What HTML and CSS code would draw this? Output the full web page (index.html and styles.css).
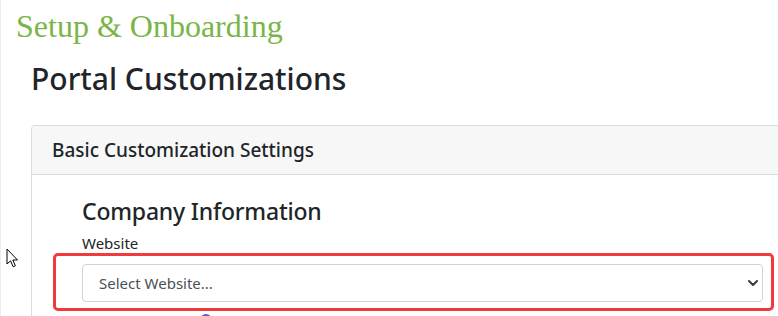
FILE: index.html
```html
<!DOCTYPE html>
<html lang="en">
<head>
    <meta charset="UTF-8">
    <meta name="viewport" content="width=device-width, initial-scale=1.0">
    <title>Portal Customizations</title>
    <link rel="stylesheet" href="styles.css">
</head>
<body>
    <div class="page">
        <div class="brandTitle">Setup &amp; Onboarding</div>

        <div class="content">
            <h1 class="pageTitle">Portal Customizations</h1>

            <div class="card">
                <div class="cardHeader">Basic Customization Settings</div>
                <div class="cardBody">
                    <h4 class="sectionTitle">Company Information</h4>

                    <div class="formGroup">
                        <label class="formLabel" for="website">Website</label>
                        <div class="selectWrap">
                            <select class="formSelect" id="website">
                                <option>Select Website...</option>
                            </select>
                            <svg class="chevron" width="12" height="10" viewBox="0 0 12 10">
                                <path d="M2 3 L6 7 L10 3" fill="none" stroke="#343a40" stroke-width="2" stroke-linecap="round" stroke-linejoin="round"/>
                            </svg>
                            <div class="highlight"></div>
                        </div>
                    </div>

                    <div class="nextRow"><span class="dot"></span></div>
                </div>
            </div>
        </div>

        <svg class="mouse" width="14" height="21" viewBox="0 0 14 21">
            <path d="M1 1 L1 16 L4.5 12.8 L7.2 18.8 L9.4 17.8 L6.8 12 L11.5 12 Z" fill="#fff" stroke="#000" stroke-width="1" stroke-linejoin="miter"/>
        </svg>
    </div>
</body>
</html>
```

FILE: styles.css
```css
html, body {
    margin: 0;
    background-color: #fff;
    overflow: hidden;
}

.page {
    position: relative;
    height: 316px;
    border-left: 1px solid #ececec;
    font-family: "Noto Sans", "Open Sans", sans-serif;
    color: #212529;
}

.brandTitle {
    font-family: "Liberation Serif", "Times New Roman", serif;
    font-size: 32px;
    line-height: 38px;
    color: #7ab547;
    padding: 7px 0 0 15px;
}

.content {
    padding-left: 30px;
}

.pageTitle {
    margin: 14px 0 0 0;
    font-size: 30px;
    font-weight: 500;
    line-height: 40px;
}

.card {
    margin-top: 26px;
    margin-right: -36px;
    border: 1px solid #dcdcdc;
    border-radius: 4px;
}

.cardHeader {
    background-color: #f7f7f7;
    border-bottom: 1px solid #dcdcdc;
    border-radius: 4px 4px 0 0;
    padding: 0 20px;
    height: 48px;
    line-height: 48px;
    font-size: 19px;
    font-weight: 500;
}

.cardBody {
    padding: 20px 50px 0 50px;
}

.sectionTitle {
    margin: 0;
    font-size: 23px;
    font-weight: 500;
    line-height: 32px;
    letter-spacing: -0.2px;
}

.formGroup {
    margin-top: 6px;
}

.formLabel {
    display: block;
    font-size: 15px;
    line-height: 21px;
    margin-bottom: 10px;
}

.selectWrap {
    position: relative;
}

.formSelect {
    display: block;
    width: 100%;
    height: 38px;
    padding: 0 16px;
    border: 1px solid #ced4da;
    border-radius: 4px;
    background-color: #fff;
    font-family: "Noto Sans", "Open Sans", sans-serif;
    font-size: 15px;
    color: #495057;
    appearance: none;
    -webkit-appearance: none;
}

.chevron {
    position: absolute;
    right: 4px;
    top: 14px;
}

.highlight {
    position: absolute;
    left: -29px;
    top: -11px;
    right: -11px;
    bottom: -9px;
    border: 3px solid #ef3b3b;
    border-radius: 5px;
    pointer-events: none;
}

.nextRow {
    padding: 12px 0 0 118px;
}

.dot {
    display: block;
    width: 12px;
    height: 12px;
    border-radius: 50%;
    background-color: #5b5fc7;
}

.mouse {
    position: absolute;
    left: 5px;
    top: 248px;
}
```
